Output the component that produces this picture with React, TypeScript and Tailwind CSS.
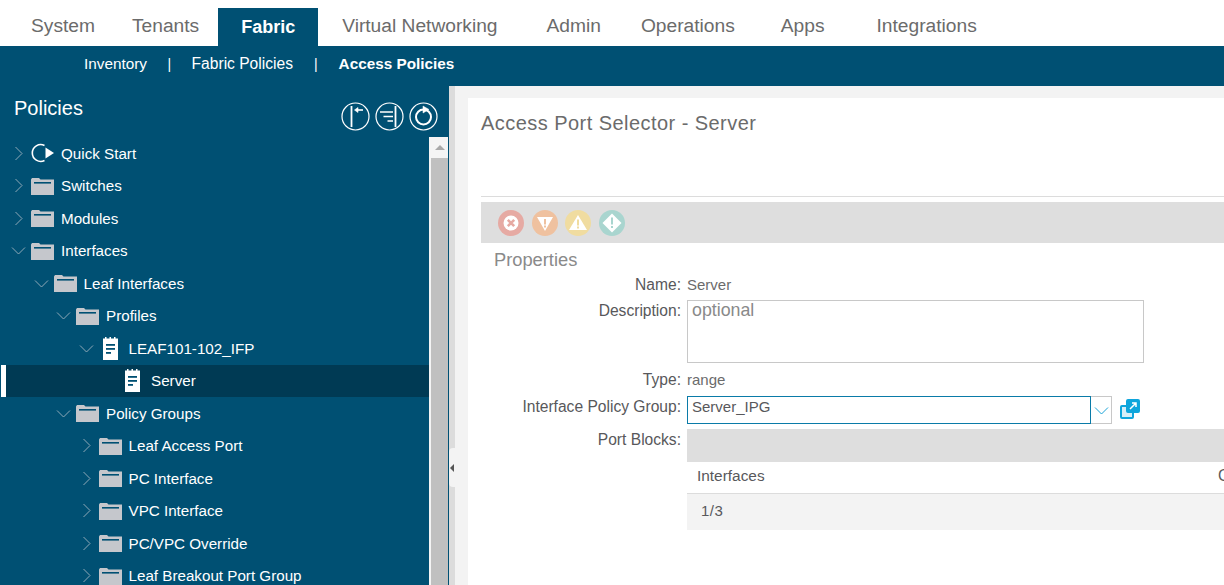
const sans = "font-['Liberation_Sans',Arial,sans-serif]"

const tabs = [
  { name: "System", className: "pl-[31px] pr-[37px]" },
  { name: "Tenants", className: "pr-[19px]" },
  { name: "Fabric", active: true },
  { name: "Virtual Networking", className: "pl-[24px] pr-[49px]" },
  { name: "Admin", className: "pr-[40px]" },
  { name: "Operations", className: "pr-[46px]" },
  { name: "Apps", className: "pr-[52px]" },
  { name: "Integrations" },
]

const tree = [
  { label: "Quick Start", level: 0, icon: "start", open: false },
  { label: "Switches", level: 0, icon: "folder", open: false },
  { label: "Modules", level: 0, icon: "folder", open: false },
  { label: "Interfaces", level: 0, icon: "folder", open: true },
  { label: "Leaf Interfaces", level: 1, icon: "folder", open: true },
  { label: "Profiles", level: 2, icon: "folder", open: true },
  { label: "LEAF101-102_IFP", level: 3, icon: "note", open: true },
  { label: "Server", level: 4, icon: "note", selected: true, leaf: true },
  { label: "Policy Groups", level: 2, icon: "folder", open: true },
  { label: "Leaf Access Port", level: 3, icon: "folder", open: false },
  { label: "PC Interface", level: 3, icon: "folder", open: false },
  { label: "VPC Interface", level: 3, icon: "folder", open: false },
  { label: "PC/VPC Override", level: 3, icon: "folder", open: false },
  { label: "Leaf Breakout Port Group", level: 3, icon: "folder", open: false },
]

const indents = ["pl-[11px]", "pl-[33.5px]", "pl-[56px]", "pl-[78.5px]", "pl-[102px]"]

function Folder() {
  return (
    <svg width="23" height="18" viewBox="0 0 23 18" className="shrink-0">
      <path d="M0 2.5 L1 1 H8 L9.5 2.5 H23 V18 H0 Z" fill="#c5c7cc" />
      <rect x="3" y="5" width="17" height="1.6" fill="#005073" />
    </svg>
  )
}

function Note() {
  return (
    <svg width="15" height="23" viewBox="0 0 15 23" className="shrink-0">
      <path d="M0 1.5 H2 V0 H3.5 V1.5 H6.5 V0 H8 V1.5 H11 V0 H12.5 V1.5 H15 V23 H0 Z" fill="#fff" />
      <rect x="3" y="7" width="9" height="1.8" fill="#005073" />
      <rect x="3" y="11" width="9" height="1.8" fill="#005073" />
      <rect x="3" y="15" width="5" height="1.8" fill="#005073" />
    </svg>
  )
}

function Start() {
  return (
    <svg width="23" height="20" viewBox="0 0 23 20" className="shrink-0">
      <path d="M13.5 2.5 A8.4 8.4 0 1 0 13.5 17.5" fill="none" stroke="#fff" strokeWidth="1.6" />
      <path d="M14.5 4.5 L23 10 L14.5 15.5 Z" fill="#fff" />
    </svg>
  )
}

function Chevron({ open, color }: { open?: boolean; color: string }) {
  return (
    <svg width="15" height="15" viewBox="0 0 15 15" fill="none" stroke={color} strokeWidth="1" className="shrink-0">
      <path d={open ? "M1 4.5 L7.5 11 L14 4.5" : "M4.5 1 L11 7.5 L4.5 14"} />
    </svg>
  )
}

function TreeRow({ row }: { row: (typeof tree)[number] }) {
  return (
    <div
      className={`h-[32.5px] flex items-center ${
        row.selected ? "ml-[1px] pl-[115px] bg-[#003a54] border-l-[5px] border-white" : indents[row.level]
      }`}
    >
      {!row.leaf && (
        <span className="mr-[5px]">
          <Chevron open={row.open} color="#8fa9b8" />
        </span>
      )}
      {row.icon === "folder" && <Folder />}
      {row.icon === "note" && (
        <span className="w-[23px] flex justify-center">
          <Note />
        </span>
      )}
      {row.icon === "start" && <Start />}
      <span className="ml-[7px] pt-[2px] text-[15.2px] text-white whitespace-nowrap">{row.label}</span>
    </div>
  )
}

function RoundIcon({ children }: { children: React.ReactNode }) {
  return (
    <svg width="29" height="29" viewBox="0 0 29 29" fill="none" stroke="#fff">
      <circle cx="14.5" cy="14.5" r="13.5" strokeWidth="1.2" />
      {children}
    </svg>
  )
}

function Fault({ color, children }: { color: string; children: React.ReactNode }) {
  return (
    <svg width="26" height="26" viewBox="0 0 26 26">
      <circle cx="13" cy="13" r="13" fill={color} />
      {children}
    </svg>
  )
}

export default function App() {
  return (
    <div className={`h-[585px] w-[1224px] overflow-hidden flex flex-col bg-white ${sans}`}>
      {/* Top tabs */}
      <div className="h-[46px] flex items-end shrink-0">
        {tabs.map((tab) =>
          tab.active ? (
            <div
              key={tab.name}
              className="w-[100px] h-[38px] bg-[#005073] text-white text-[18px] font-bold flex items-center justify-center"
            >
              {tab.name}
            </div>
          ) : (
            <div
              key={tab.name}
              className={`h-[38px] pb-[2px] flex items-center text-[19.2px] text-[#6b6b6b] ${tab.className ?? ""}`}
            >
              {tab.name}
            </div>
          ),
        )}
      </div>

      {/* Sub navigation */}
      <div className="h-[40px] bg-[#005073] shrink-0 flex items-center pl-[84px] text-[15.3px] text-white pb-[4px]">
        <span>Inventory</span>
        <span className="mx-[20.5px] text-[14px]">|</span>
        <span className="text-[15.6px]">Fabric Policies</span>
        <span className="mx-[21px] text-[14px]">|</span>
        <span className="font-bold">Access Policies</span>
      </div>

      <div className="flex-1 flex min-h-0">
        {/* Left panel */}
        <div className="w-[449px] shrink-0 bg-[#005073] flex flex-col border-r border-[#005073]">
          <div className="h-[51px] shrink-0 flex items-start justify-between pl-[14px] pr-[10px] pt-[9px]">
            <span className="text-[20px] text-white leading-[26px]">Policies</span>
            <div className="flex gap-[5px] pt-[7px]">
              <RoundIcon>
                <path d="M10.5 4 V25" strokeWidth="1.8" />
                <path d="M15 8 H22" strokeWidth="1.6" />
                <path d="M13.5 8 L17 5.5 V10.5 Z" fill="#fff" strokeWidth="0.6" />
              </RoundIcon>
              <RoundIcon>
                <path d="M20.5 4 V25" strokeWidth="1.8" />
                <path d="M5 10 H18 M8.5 14.5 H18 M12.5 19 H18" strokeWidth="1.6" />
              </RoundIcon>
              <RoundIcon>
                <circle cx="14.5" cy="15" r="7.5" strokeWidth="2" />
                <path d="M14 4 L20 7.5 L14 11 Z" fill="#fff" strokeWidth="0.5" />
              </RoundIcon>
            </div>
          </div>
          <div className="flex-1 flex min-h-0">
            <div className="w-[429px] shrink-0">
              {tree.map((row) => (
                <TreeRow key={row.label} row={row} />
              ))}
            </div>
            <div className="w-[19px] bg-[#f4f4f4] pl-[2px]">
              <div className="h-[21px] flex items-center justify-center">
                <div className="w-0 h-0 border-x-[5px] border-x-transparent border-b-[5px] border-b-[#a8a8a8]" />
              </div>
              <div className="h-full bg-[#c0c0c0]" />
            </div>
          </div>
        </div>

        {/* Right panel */}
        <div className="relative flex-1 bg-[#f3f3f3] pl-[13px] pt-[12px] border-l-[6px] border-[#dcdcdc]">
          <div className="absolute left-[-6px] top-[362px] w-[6px] h-[39px] bg-[#f3f3f3] rounded-l flex items-center justify-center">
            <div className="w-0 h-0 border-y-[4px] border-y-transparent border-r-[4px] border-r-[#555]" />
          </div>
          <div className="h-full bg-white pl-[13px] overflow-hidden">
            <div className="h-[99px] pt-[10px] text-[20px] leading-[30px] text-[#6b6b6b] border-b border-[#dcdcdc] tracking-[0.45px]">
              Access Port Selector - Server
            </div>
            <div className="mt-[5px] h-[41px] bg-[#dedede] flex items-center pl-[17px] gap-[7.7px]">
              <Fault color="#e6aaa3">
                <circle cx="13" cy="13" r="7.5" fill="#fff" />
                <path d="M9.8 9.8 L16.2 16.2 M16.2 9.8 L9.8 16.2" stroke="#e6aaa3" strokeWidth="2.6" />
              </Fault>
              <Fault color="#efc19f">
                <path d="M5 7 H21 L13 21 Z" fill="#fff" />
                <rect x="12" y="9" width="2" height="5.5" fill="#efc19f" />
                <rect x="12" y="15.5" width="2" height="2" fill="#efc19f" />
              </Fault>
              <Fault color="#f0dca0">
                <path d="M13 5 L22 20 H4 Z" fill="#fff" />
                <rect x="12" y="9.5" width="2" height="6" fill="#f0dca0" />
                <rect x="12" y="16.5" width="2" height="2" fill="#f0dca0" />
              </Fault>
              <Fault color="#a9d5cf">
                <path d="M13 3.5 L22.5 13 L13 22.5 L3.5 13 Z" fill="#fff" />
                <rect x="12" y="7.5" width="2" height="7" fill="#a9d5cf" />
                <rect x="12" y="16" width="2" height="2" fill="#a9d5cf" />
              </Fault>
            </div>
            <div className="pl-[13px] pt-[5px] h-[32px] text-[18.3px] leading-[24px] text-[#8a8a8a]">Properties</div>

            {/* Form */}
            <div className="grid grid-cols-[200px_1fr] gap-x-[6px] text-[15.6px] text-[#58585b]">
              <div className="h-[25px] text-right leading-[19px]">Name:</div>
              <div className="h-[25px] text-[15px] leading-[19px] text-[#6b6b6b]">Server</div>

              <div className="h-[66px] text-right leading-[22px]">Description:</div>
              <div className="h-[66px]">
                <div className="w-[457px] h-[63px] border border-[#c8c8c8] px-[4px] text-[17.8px] leading-[18px] text-[#8a8a8a]">
                  optional
                </div>
              </div>

              <div className="h-[30px] pb-[2px] flex items-center justify-end">Type:</div>
              <div className="h-[30px] pb-[2px] flex items-center text-[15px] text-[#6b6b6b]">range</div>

              <div className="h-[33px] text-right leading-[21px]">Interface Policy Group:</div>
              <div className="h-[33px] flex items-start">
                <div className="w-[404px] h-[28px] border border-[#0a7ba8] px-[4px] pb-[5px] flex items-center text-[15px] text-[#58585b]">
                  Server_IPG
                </div>
                <div className="w-[21px] h-[28px] border border-l-0 border-[#c8c8c8] flex items-center justify-center">
                  <Chevron open color="#1aa4d8" />
                </div>
                <svg width="20" height="20" viewBox="0 0 20 20" className="ml-[8px] mt-[3px]" fill="none">
                  <rect x="1" y="7" width="12" height="12" stroke="#0ea5dc" strokeWidth="2" fill="#d6eef8" rx="1" />
                  <rect x="7" y="1" width="12" height="12" stroke="#0ea5dc" strokeWidth="2" fill="#0ea5dc" rx="1" />
                  <path d="M10 10 L16 4 M12 4 H16 V8" stroke="#fff" strokeWidth="1.5" />
                </svg>
              </div>

              <div className="text-right leading-[21px]">Port Blocks:</div>
              <div className="min-w-0">
                <div className="h-[33px] bg-[#dedede]" />
                <div className="h-[32px] pb-[3px] border-b border-[#dcdcdc] flex items-center justify-between pl-[10px]">
                  <span className="text-[15.4px]">Interfaces</span>
                  <span className="w-[6px] overflow-hidden">C</span>
                </div>
                <div className="h-[36px] pb-[2px] bg-[#f3f3f3] flex items-center pl-[14px] text-[15px] tracking-[0.5px]">1/3</div>
              </div>
            </div>
          </div>
        </div>
      </div>
    </div>
  )
}
